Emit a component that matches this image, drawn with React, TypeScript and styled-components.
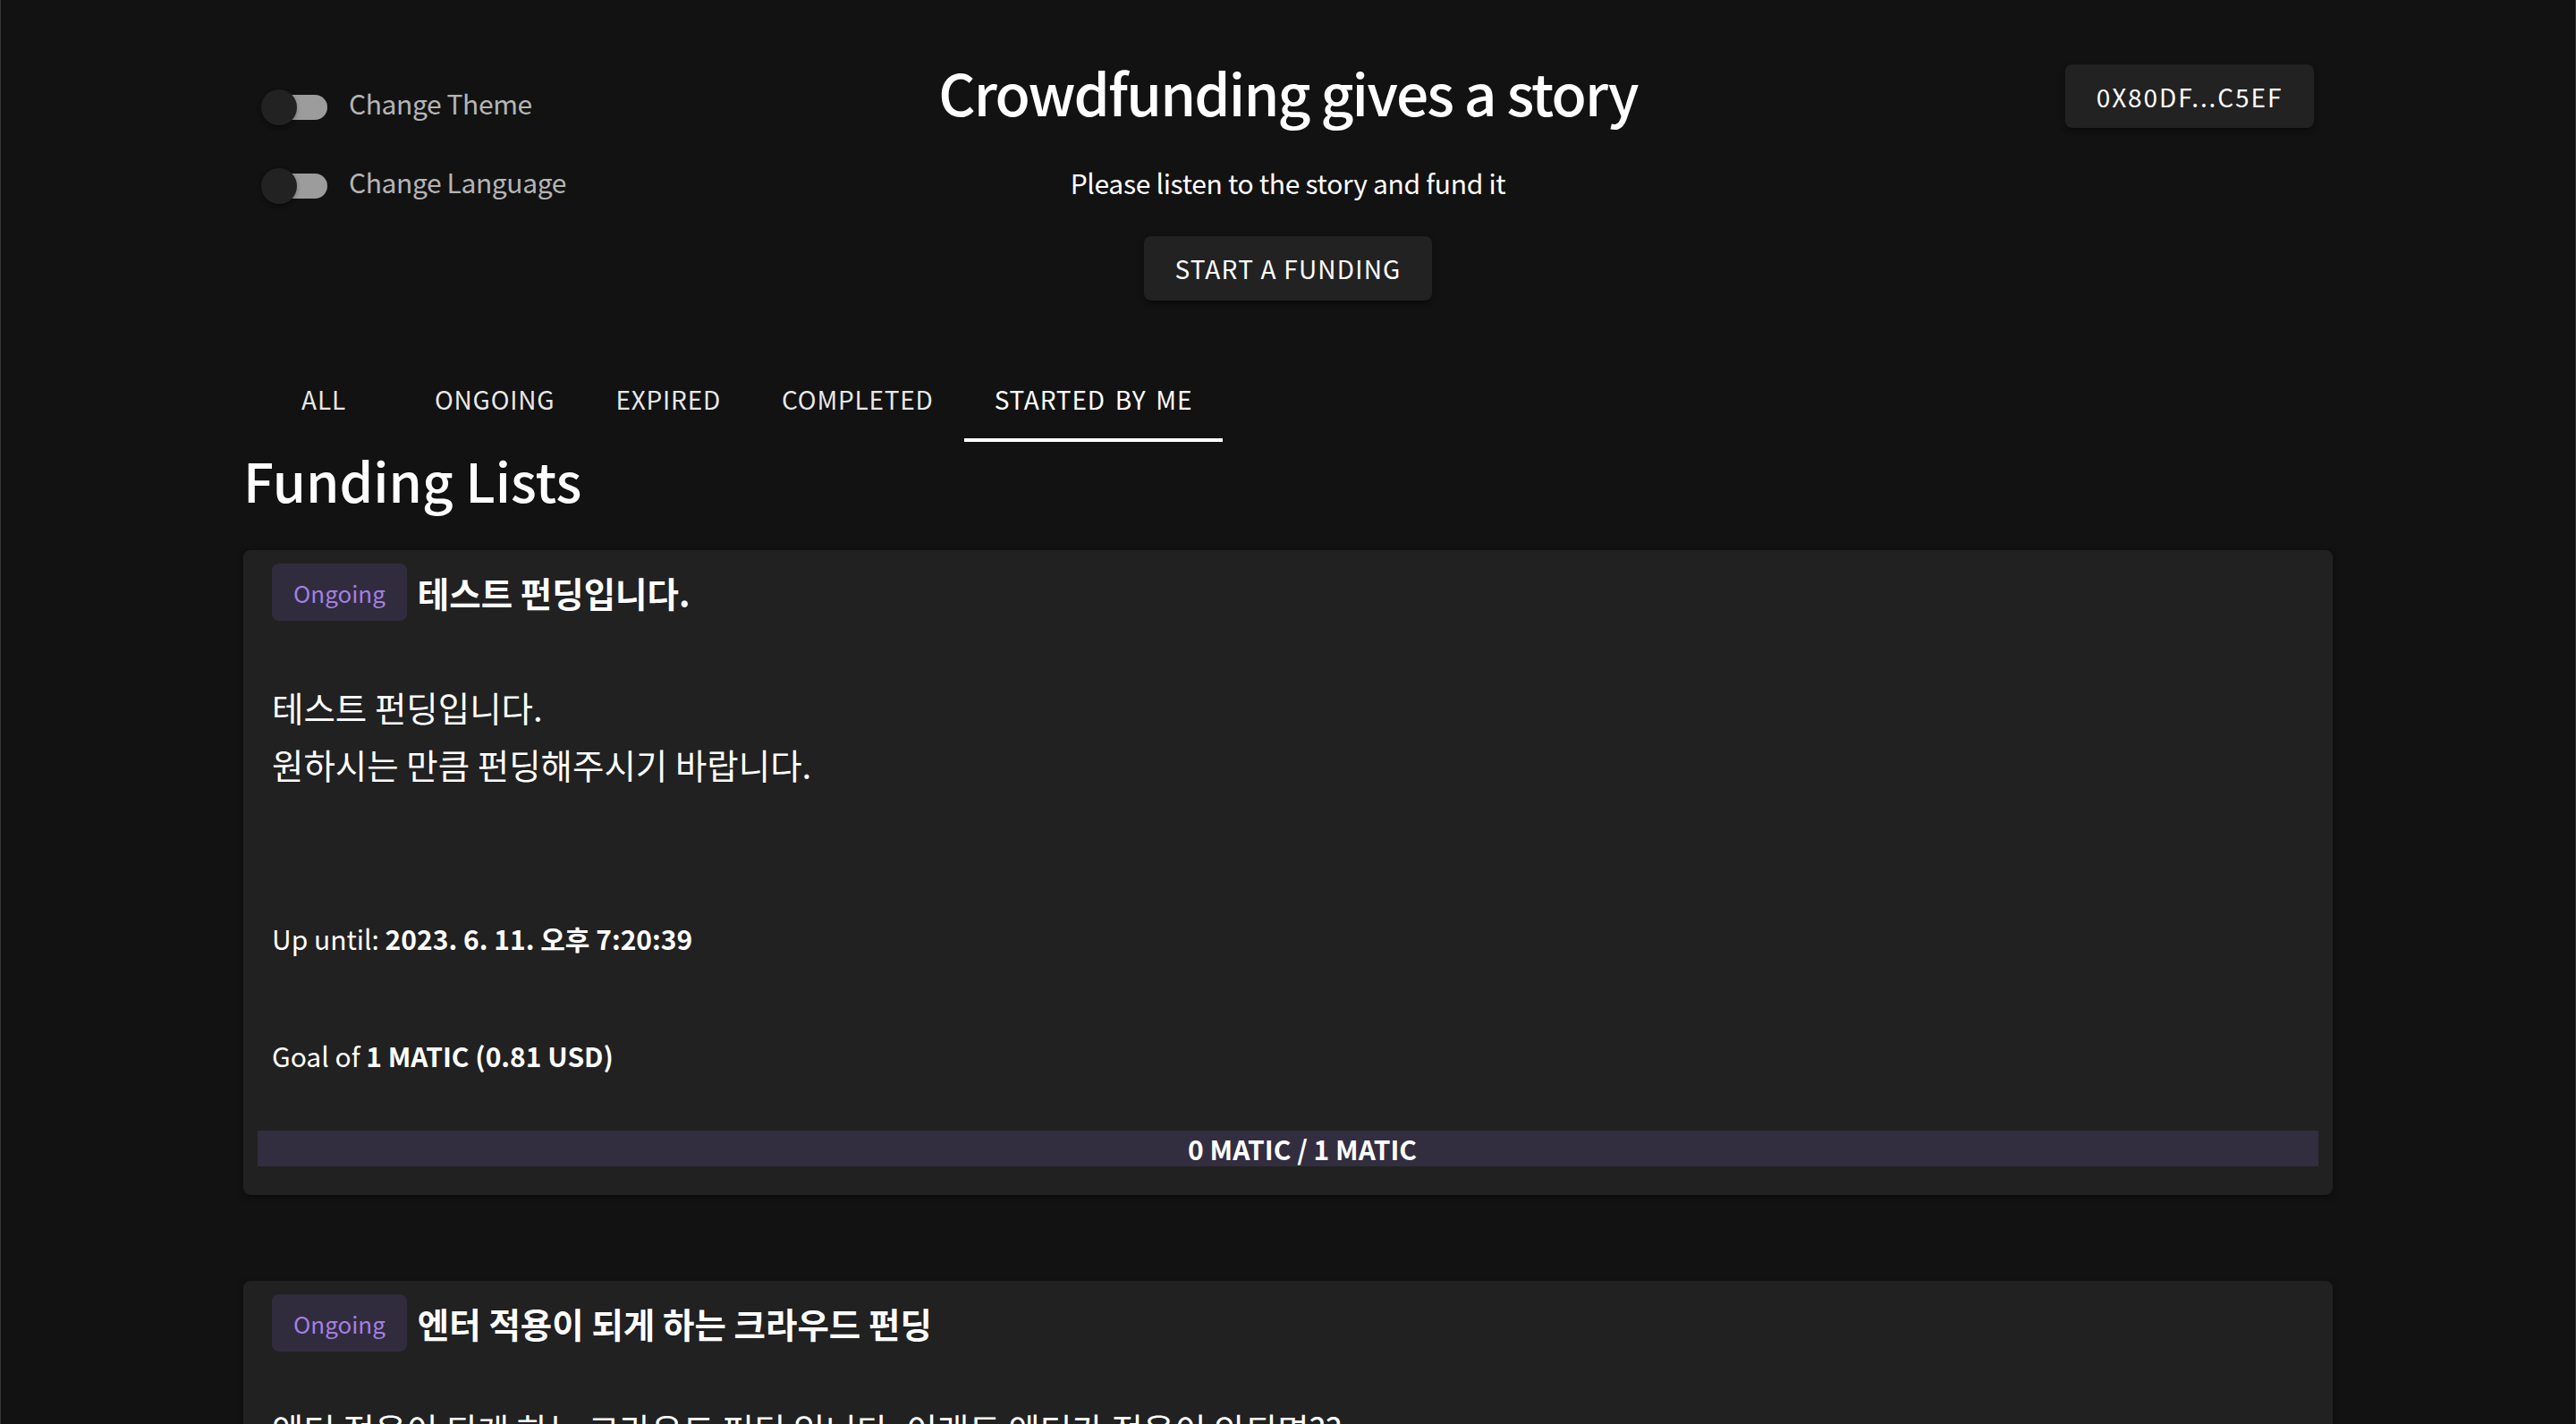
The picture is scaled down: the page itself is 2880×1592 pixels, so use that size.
import React from "react";
import styled, { createGlobalStyle } from "styled-components";

const Global = createGlobalStyle`
  html, body {
    margin: 0;
    padding: 0;
    background: #121212;
    overflow: hidden;
  }
  body {
    font-family: "Noto Sans CJK KR", "Noto Sans", sans-serif;
    color: #ffffff;
  }
  * { box-sizing: border-box; }
`;

const Page = styled.div`
  min-height: 100vh;
  border-left: 1px solid #353535;
  border-right: 1px solid #353535;
`;

const Container = styled.main`
  max-width: 2400px;
  margin: 0 auto;
  padding: 0 32px;
`;

const Header = styled.header`
  display: grid;
  grid-template-columns: 1fr auto 1fr;
  align-items: start;
`;

const ToggleColumn = styled.div`
  display: flex;
  flex-direction: column;
  gap: 12px;
  padding-top: 82px;
  padding-left: 2px;
`;

const ToggleRow = styled.label`
  display: flex;
  align-items: center;
  height: 76px;
  cursor: pointer;
  color: rgba(255, 255, 255, 0.7);
  font-size: 30px;
  letter-spacing: -0.4px;
`;

const ToggleText = styled.span`
  padding-bottom: 10px;
`;

const SwitchRoot = styled.span`
  position: relative;
  flex: none;
  width: 116px;
  height: 76px;
`;

const Track = styled.span`
  position: absolute;
  left: 24px;
  top: 24px;
  width: 68px;
  height: 28px;
  border-radius: 14px;
  background: #9c9c9c;
`;

const Thumb = styled.span`
  position: absolute;
  left: 18px;
  top: 18px;
  width: 40px;
  height: 40px;
  border-radius: 50%;
  background: #222222;
  box-shadow: 0 4px 2px -2px rgba(0, 0, 0, 0.2), 0 2px 4px 0 rgba(0, 0, 0, 0.14),
    0 2px 6px 0 rgba(0, 0, 0, 0.12);
`;

const Center = styled.div`
  display: flex;
  flex-direction: column;
  align-items: center;
`;

const Title = styled.h1`
  margin: 62px 0 0;
  font-size: 64px;
  line-height: 80px;
  font-weight: 500;
  letter-spacing: -1.8px;
`;

const Subtitle = styled.p`
  margin: 38px 0 0;
  font-size: 30px;
  line-height: 48px;
  font-weight: 400;
  letter-spacing: -0.3px;
`;

const ActionButton = styled.button<{ $spacing: number }>`
  display: flex;
  align-items: center;
  justify-content: center;
  height: 72px;
  padding: 0;
  border: none;
  border-radius: 8px;
  background: #222222;
  color: #ffffff;
  font-family: inherit;
  font-size: 28px;
  font-weight: 400;
  white-space: nowrap;
  letter-spacing: ${(p) => p.$spacing}px;
  text-transform: uppercase;
  box-shadow: 0 6px 2px -4px rgba(0, 0, 0, 0.2), 0 4px 4px 0 rgba(0, 0, 0, 0.14),
    0 2px 10px 0 rgba(0, 0, 0, 0.12);
  cursor: pointer;
`;

const StartButton = styled(ActionButton)`
  margin-top: 36px;
  width: 322px;
`;

const Right = styled.div`
  display: flex;
  justify-content: flex-end;
  padding-top: 72px;
  padding-right: 21px;
`;

const WalletButton = styled(ActionButton)`
  width: 278px;
  height: 71px;
`;

const TabBar = styled.nav`
  display: flex;
  margin-top: 62px;
`;

const Tab = styled.button<{ $active?: boolean }>`
  min-width: 180px;
  height: 96px;
  padding: 0 34px;
  border: none;
  background: transparent;
  color: ${(p) => (p.$active ? "#ffffff" : "rgba(255,255,255,0.92)")};
  font-family: inherit;
  font-size: 28px;
  font-weight: 400;
  letter-spacing: 0.8px;
  word-spacing: 4px;
  text-transform: uppercase;
  box-shadow: ${(p) => (p.$active ? "inset 0 -4px 0 #ffffff" : "none")};
  cursor: pointer;
`;

const SectionTitle = styled.h2`
  margin: 4px 0 0;
  font-size: 60px;
  line-height: 76px;
  font-weight: 500;
`;

const CardList = styled.div`
  display: flex;
  flex-direction: column;
  gap: 96px;
  margin-top: 41px;
`;

const Card = styled.article`
  background: #212121;
  border-radius: 8px;
  padding: 15px 16px 32px;
  box-shadow: 0 4px 2px -2px rgba(0, 0, 0, 0.2), 0 2px 4px 0 rgba(0, 0, 0, 0.14),
    0 2px 10px 0 rgba(0, 0, 0, 0.12);
`;

const CardHead = styled.div`
  display: flex;
  align-items: center;
  gap: 12px;
  padding-left: 16px;
`;

const Badge = styled.span`
  display: inline-flex;
  align-items: center;
  height: 64px;
  padding: 0 24px;
  border-radius: 8px;
  background: #312c3d;
  color: #a47fe2;
  font-size: 26px;
`;

const CardTitle = styled.h3`
  margin: 0;
  font-size: 38.5px;
  line-height: 48px;
  font-weight: 700;
`;

const Description = styled.p<{ $gap: number }>`
  margin: ${(p) => p.$gap}px 0 0;
  padding-left: 16px;
  font-size: 38.5px;
  line-height: 64px;
  white-space: pre-line;
`;

const Meta = styled.p<{ $gap: number }>`
  margin: ${(p) => p.$gap}px 0 0;
  padding-left: 16px;
  font-size: 30px;
  line-height: 48px;

  strong {
    font-weight: 700;
  }
`;

const Progress = styled.div`
  margin-top: 60px;
  height: 40px;
  padding-left: 32px;
  background: #322e40;
  display: flex;
  align-items: center;
  justify-content: center;
  font-size: 30px;
  font-weight: 700;
`;

type Funding = {
  title: string;
  body: string;
  deadline: string;
  goal: string;
  raised: string;
  gap: number;
};

const fundings: Funding[] = [
  {
    title: "테스트 펀딩입니다.",
    body: "테스트 펀딩입니다.\n원하시는 만큼 펀딩해주시기 바랍니다.",
    deadline: "2023. 6. 11. 오후 7:20:39",
    goal: "1 MATIC (0.81 USD)",
    raised: "0 MATIC / 1 MATIC",
    gap: 64,
  },
  {
    title: "엔터 적용이 되게 하는 크라우드 펀딩",
    body: "엔터 적용이 되게 하는 크라우드 펀딩 입니다. 이래도 엔터가 적용이 안되면??\n엔터가 적용되어야 합니다.",
    deadline: "2023. 6. 12. 오후 3:10:05",
    goal: "2 MATIC (1.62 USD)",
    raised: "0 MATIC / 2 MATIC",
    gap: 54,
  },
];

const tabs = ["All", "Ongoing", "Expired", "Completed", "Started by me"];

function Toggle({ label }: { label: string }) {
  return (
    <ToggleRow>
      <SwitchRoot>
        <Track />
        <Thumb />
      </SwitchRoot>
      <ToggleText>{label}</ToggleText>
    </ToggleRow>
  );
}

export default function App() {
  return (
    <Page>
      <Global />
      <Container>
        <Header>
          <ToggleColumn>
            <Toggle label="Change Theme" />
            <Toggle label="Change Language" />
          </ToggleColumn>
          <Center>
            <Title>Crowdfunding gives a story</Title>
            <Subtitle>Please listen to the story and fund it</Subtitle>
            <StartButton $spacing={1.2}>Start a funding</StartButton>
          </Center>
          <Right>
            <WalletButton $spacing={1.9}>0x80DF...C5EF</WalletButton>
          </Right>
        </Header>

        <TabBar>
          {tabs.map((t, i) => (
            <Tab key={t} $active={i === tabs.length - 1}>
              {t}
            </Tab>
          ))}
        </TabBar>

        <SectionTitle>Funding Lists</SectionTitle>

        <CardList>
          {fundings.map((f) => (
            <Card key={f.title}>
              <CardHead>
                <Badge>Ongoing</Badge>
                <CardTitle>{f.title}</CardTitle>
              </CardHead>
              <Description $gap={f.gap}>{f.body}</Description>
              <Meta $gap={139}>
                Up until: <strong>{f.deadline}</strong>
              </Meta>
              <Meta $gap={83}>
                Goal of <strong>{f.goal}</strong>
              </Meta>
              <Progress>{f.raised}</Progress>
            </Card>
          ))}
        </CardList>
      </Container>
    </Page>
  );
}
